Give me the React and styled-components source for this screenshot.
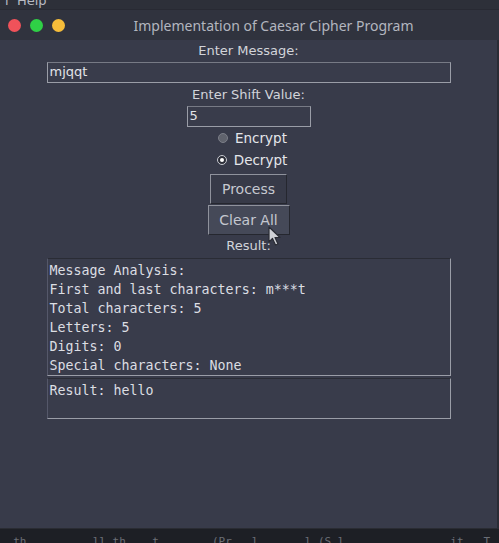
import React from "react";
import styled, { createGlobalStyle } from "styled-components";

const GlobalStyle = createGlobalStyle`
  html, body {
    margin: 0;
    padding: 0;
    background: #21232a;
  }
  body {
    width: 499px;
    height: 543px;
    overflow: hidden;
    font-family: "DejaVu Sans", sans-serif;
  }
`;

const Screen = styled.div`
  width: 499px;
  height: 543px;
  display: flex;
  flex-direction: column;
  background: #2c2f3a;
`;

const MenuStrip = styled.div`
  height: 9px;
  overflow: hidden;
  background: #2d3039;
  color: #b7bac2;
  font-size: 13px;
  line-height: 13px;
  padding-left: 5px;
  white-space: pre;
  span {
    display: block;
    margin-top: -6px;
  }
`;

const TitleBar = styled.div`
  height: 31px;
  display: flex;
  align-items: center;
  background: #30333e;
  border-top: 1px solid #282a33;
  box-sizing: border-box;
  padding-left: 8px;
`;

const Lights = styled.div`
  display: flex;
  gap: 9px;
`;

const Light = styled.div`
  width: 13px;
  height: 13px;
  border-radius: 50%;
  background: ${(p) => p.color};
`;

const Title = styled.div`
  flex: 1;
  text-align: center;
  padding-right: 17px;
  font-family: "Noto Sans", "Open Sans", sans-serif;
  font-size: 14px;
  color: #b3b6bf;
`;

const Window = styled.div`
  height: 488px;
  display: flex;
  border-right: 2px solid #2a2c35;
  background: #383b4a;
`;

const Body = styled.div`
  flex: 1;
  display: flex;
  flex-direction: column;
  align-items: center;
`;

const Label = styled.div`
  height: ${(p) => p.h || 22}px;
  line-height: ${(p) => p.h || 22}px;
  font-size: 13px;
  color: #d2d4da;
`;

const Entry = styled.div`
  width: ${(p) => p.width}px;
  height: 21px;
  box-sizing: border-box;
  border: 1px solid #9a9da7;
  border-top-color: #777a85;
  background: #393c4b;
  color: #e2e4e8;
  font-size: 13px;
  line-height: 18px;
  padding-left: 2px;
`;

const RadioRow = styled.label`
  height: 22px;
  display: flex;
  align-items: center;
  gap: 7px;
  font-size: 13.5px;
  color: #e4e6ea;
  margin-left: ${(p) => p.shift || 0}px;
`;

const RadioDot = styled.span`
  width: 10px;
  height: 10px;
  border-radius: 50%;
  box-sizing: border-box;
  background: ${(p) => (p.checked ? "#2c2e38" : "#60636d")};
  border: 1px solid ${(p) => (p.checked ? "#c9cbd2" : "#7b7e88")};
  display: flex;
  align-items: center;
  justify-content: center;
  &::after {
    content: "";
    width: 4px;
    height: 4px;
    border-radius: 50%;
    background: ${(p) => (p.checked ? "#ffffff" : "transparent")};
  }
`;

const Button = styled.div`
  position: relative;
  width: ${(p) => p.width}px;
  height: 30px;
  box-sizing: border-box;
  display: flex;
  align-items: center;
  justify-content: center;
  font-size: 14px;
  color: ${(p) => (p.hover ? "#c4c7cf" : "#c6c9d0")};
  background: ${(p) => (p.hover ? "#454958" : "#373a48")};
  border: 1px solid #8f929c;
  border-right-color: #25272f;
  border-bottom-color: #25272f;
  margin-top: ${(p) => p.top || 0}px;
`;

const Cursor = styled.svg`
  position: absolute;
  left: 59px;
  top: 20px;
`;

const TextBox = styled.div`
  width: 404px;
  height: ${(p) => p.height}px;
  box-sizing: border-box;
  border: 1px solid #9a9da7;
  border-top-color: #2a2c35;
  border-left-color: #55586a;
  background: #393c4b;
  padding: 2px 0 0 2px;
  margin-top: ${(p) => p.top || 0}px;
  font-family: "DejaVu Sans Mono", monospace;
  font-size: 13.3px;
  line-height: 19px;
  color: #dcdee3;
  white-space: pre;
`;

const BottomStrip = styled.div`
  flex: 1;
  overflow: hidden;
  background: #1d1f25;
  border-top: 1px solid #2a2c33;
  color: #6b6e76;
  font-family: "DejaVu Sans Mono", monospace;
  font-size: 11px;
  line-height: 11px;
  white-space: pre;
  span {
    display: block;
    margin-top: 7px;
  }
`;

const analysis = [
  "Message Analysis:",
  "First and last characters: m***t",
  "Total characters: 5",
  "Letters: 5",
  "Digits: 0",
  "Special characters: None",
];

export default function App() {
  return (
    <Screen>
      <GlobalStyle />
      <MenuStrip>
        <span>{"l  Help"}</span>
      </MenuStrip>
      <TitleBar>
        <Lights>
          <Light color="#f0525a" />
          <Light color="#2fd046" />
          <Light color="#f6bd3a" />
        </Lights>
        <Title>Implementation of Caesar Cipher Program</Title>
      </TitleBar>
      <Window>
        <Body>
          <Label>Enter Message:</Label>
          <Entry width={404}>mjqqt</Entry>
          <Label h={23}>Enter Shift Value:</Label>
          <Entry width={124}>5</Entry>
          <RadioRow shift={8}>
            <RadioDot />
            Encrypt
          </RadioRow>
          <RadioRow shift={7}>
            <RadioDot checked />
            Decrypt
          </RadioRow>
          <Button width={77} top={3}>Process</Button>
          <Button width={82} top={1} hover>
            Clear All
            <Cursor width="14" height="20" viewBox="0 0 14 20">
              <path
                d="M1 1 L1 16 L4.5 12.5 L7.5 19 L10 18 L7 11.5 L12 11.5 Z"
                fill="#cfd1d6"
                stroke="#2a2c34"
                strokeWidth="1.2"
                strokeLinejoin="round"
              />
            </Cursor>
          </Button>
          <Label h={21}>Result:</Label>
          <TextBox height={118} top={2}>
            {analysis.join("\n")}
          </TextBox>
          <TextBox height={41} top={2}>
            Result: hello
          </TextBox>
        </Body>
      </Window>
      <BottomStrip>
        <span>{"  th    ...   ll th    t  ...   (Pr   l  ...  l (S l  ...  ... ...  it   T  t  ...   l  i (BB"}</span>
      </BottomStrip>
    </Screen>
  );
}
